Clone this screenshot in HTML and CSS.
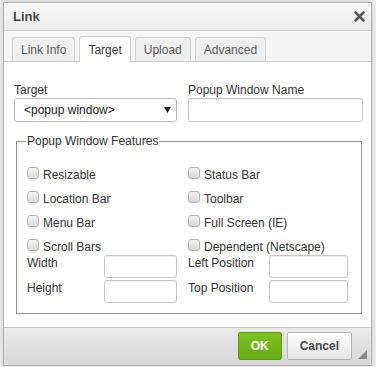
FILE: index.html
```html
<!DOCTYPE html>
<html lang="en">
<head>
    <meta charset="UTF-8">
    <meta name="viewport" content="width=device-width, initial-scale=1.0">
    <title>Link</title>
    <link rel="stylesheet" href="styles.css">
</head>
<body>
    <div class="dialog">
        <div class="dialog-title">
            <span>Link</span>
            <svg class="close" width="11" height="11" viewBox="0 0 11 11">
                <path d="M1.5 1.5 L9.5 9.5 M9.5 1.5 L1.5 9.5" stroke="#575757" stroke-width="2.6" stroke-linecap="round"/>
            </svg>
        </div>

        <div class="tabs">
            <span class="tab">Link Info</span>
            <span class="tab active">Target</span>
            <span class="tab">Upload</span>
            <span class="tab">Advanced</span>
        </div>

        <div class="contents">
            <div class="target-row">
                <div class="field">
                    <label>Target</label>
                    <div class="select">
                        <span>&lt;popup window&gt;</span>
                        <svg width="7" height="6" viewBox="0 0 7 6"><path d="M0 0 H7 L3.5 6 Z" fill="#222"/></svg>
                    </div>
                </div>
                <div class="field">
                    <label>Popup Window Name</label>
                    <input type="text" class="text-input">
                </div>
            </div>

            <fieldset class="features">
                <legend>Popup Window Features</legend>
                <div class="checks">
                    <label class="check"><input type="checkbox">Resizable</label>
                    <label class="check"><input type="checkbox">Status Bar</label>
                    <label class="check"><input type="checkbox">Location Bar</label>
                    <label class="check"><input type="checkbox">Toolbar</label>
                    <label class="check"><input type="checkbox">Menu Bar</label>
                    <label class="check"><input type="checkbox">Full Screen (IE)</label>
                    <label class="check"><input type="checkbox">Scroll Bars</label>
                    <label class="check"><input type="checkbox">Dependent (Netscape)</label>
                </div>
                <div class="sizes">
                    <div class="size"><span>Width</span><input type="text" class="text-input small"></div>
                    <div class="size"><span>Left Position</span><input type="text" class="text-input wide"></div>
                    <div class="size"><span>Height</span><input type="text" class="text-input small"></div>
                    <div class="size"><span>Top Position</span><input type="text" class="text-input wide"></div>
                </div>
            </fieldset>
        </div>

        <div class="footer">
            <button class="btn btn-ok">OK</button>
            <button class="btn">Cancel</button>
            <span class="resize"></span>
        </div>
    </div>
</body>
</html>
```

FILE: styles.css
```css
* {
    box-sizing: border-box;
}

body {
    margin: 0;
    background: #eeeeee;
    font-family: "Liberation Sans", Arial, sans-serif;
    font-size: 12px;
    color: #333;
}

.dialog {
    width: 369px;
    height: 364px;
    margin: 2px 0 0 3px;
    border: 1px solid #b2b2b2;
    background: #fff;
    box-shadow: 0 0 4px rgba(0, 0, 0, 0.2);
    display: flex;
    flex-direction: column;
}

/* Title bar */
.dialog-title {
    height: 28px;
    padding: 0 6px 0 9px;
    display: flex;
    align-items: center;
    justify-content: space-between;
    background: linear-gradient(#f8f8f8, #ebebeb);
    border-bottom: 1px solid #d0d0d0;
    font-size: 13px;
    font-weight: bold;
    color: #474747;
}

/* Tabs */
.tabs {
    height: 31px;
    padding-left: 8px;
    display: flex;
    align-items: flex-end;
    gap: 4px;
    background: #f5f5f5;
    border-bottom: 1px solid #d1d1d1;
}

.tab {
    height: 24px;
    padding: 0 8px;
    display: flex;
    align-items: center;
    border: 1px solid #d1d1d1;
    border-bottom: 0;
    border-radius: 3px 3px 0 0;
    background: #efefef;
    color: #595959;
}

.tab.active {
    height: 26px;
    margin-bottom: -1px;
    background: #fff;
    color: #383838;
}

/* Contents */
.contents {
    flex: 1;
    padding: 21px 7px 0 10px;
}

.target-row {
    display: grid;
    grid-template-columns: 163px 175px;
    column-gap: 11px;
}

.field label {
    display: block;
    line-height: 14px;
    margin-bottom: 1px;
}

.select {
    height: 24px;
    padding: 0 5px 0 9px;
    display: flex;
    align-items: center;
    justify-content: space-between;
    border: 1px solid #b6b6b6;
    border-radius: 3px;
    color: #222;
}

.text-input {
    height: 24px;
    width: 100%;
    margin: 0;
    border: 1px solid #c4c7ca;
    border-radius: 3px;
    box-shadow: inset 0 1px 1px rgba(0, 0, 0, 0.06);
}

.features {
    margin: 12px 2px 0;
    padding: 20px 10px 10px;
    border: 1px solid #8f8f8f;
    min-width: 0;
}

.features legend {
    padding: 0 1px;
    margin-left: -1px;
    line-height: 14px;
}

.checks {
    display: grid;
    grid-template-columns: 150px 162px;
    column-gap: 11px;
    row-gap: 10px;
}

.check {
    height: 14px;
    line-height: 14px;
    display: flex;
    align-items: flex-start;
    white-space: nowrap;
}

.check input {
    appearance: none;
    flex: none;
    width: 12px;
    height: 12px;
    margin: -1px 4px 0 0;
    border: 1px solid #b3b3b3;
    border-radius: 3px;
    background: linear-gradient(#f5f5f5, #d8d8d8);
}

.sizes {
    margin-top: 1px;
    display: grid;
    grid-template-columns: 150px 162px;
    column-gap: 11px;
    row-gap: 2px;
}

.size {
    display: flex;
    justify-content: space-between;
    align-items: flex-start;
}

.size span {
    padding-top: 1px;
    line-height: 14px;
}

.size .small {
    width: 73px;
    height: 23px;
}

.size .wide {
    width: 79px;
    height: 23px;
    margin-right: 2px;
}

/* Footer */
.footer {
    height: 38px;
    padding: 4px 4px 0 0;
    display: flex;
    justify-content: flex-end;
    align-items: flex-start;
    gap: 5px;
    border-top: 1px solid #c8c8c8;
    background: linear-gradient(#ebebeb, #d6d7d6);
}

.btn {
    height: 28px;
    padding: 0 12px;
    border: 1px solid #b6b6b6;
    border-radius: 2px;
    background: linear-gradient(#ffffff, #e4e4e4);
    font-family: "Liberation Sans", Arial, sans-serif;
    font-size: 12px;
    font-weight: bold;
    color: #474747;
}

.btn-ok {
    border-color: #5e9c12;
    background: linear-gradient(#7cc223, #65aa14);
    color: #fff;
}

.resize {
    align-self: flex-end;
    margin: 0 0 6px 1px;
    width: 0;
    height: 0;
    border-style: solid;
    border-width: 0 0 9px 9px;
    border-color: transparent transparent #8a8a8a transparent;
}
```
